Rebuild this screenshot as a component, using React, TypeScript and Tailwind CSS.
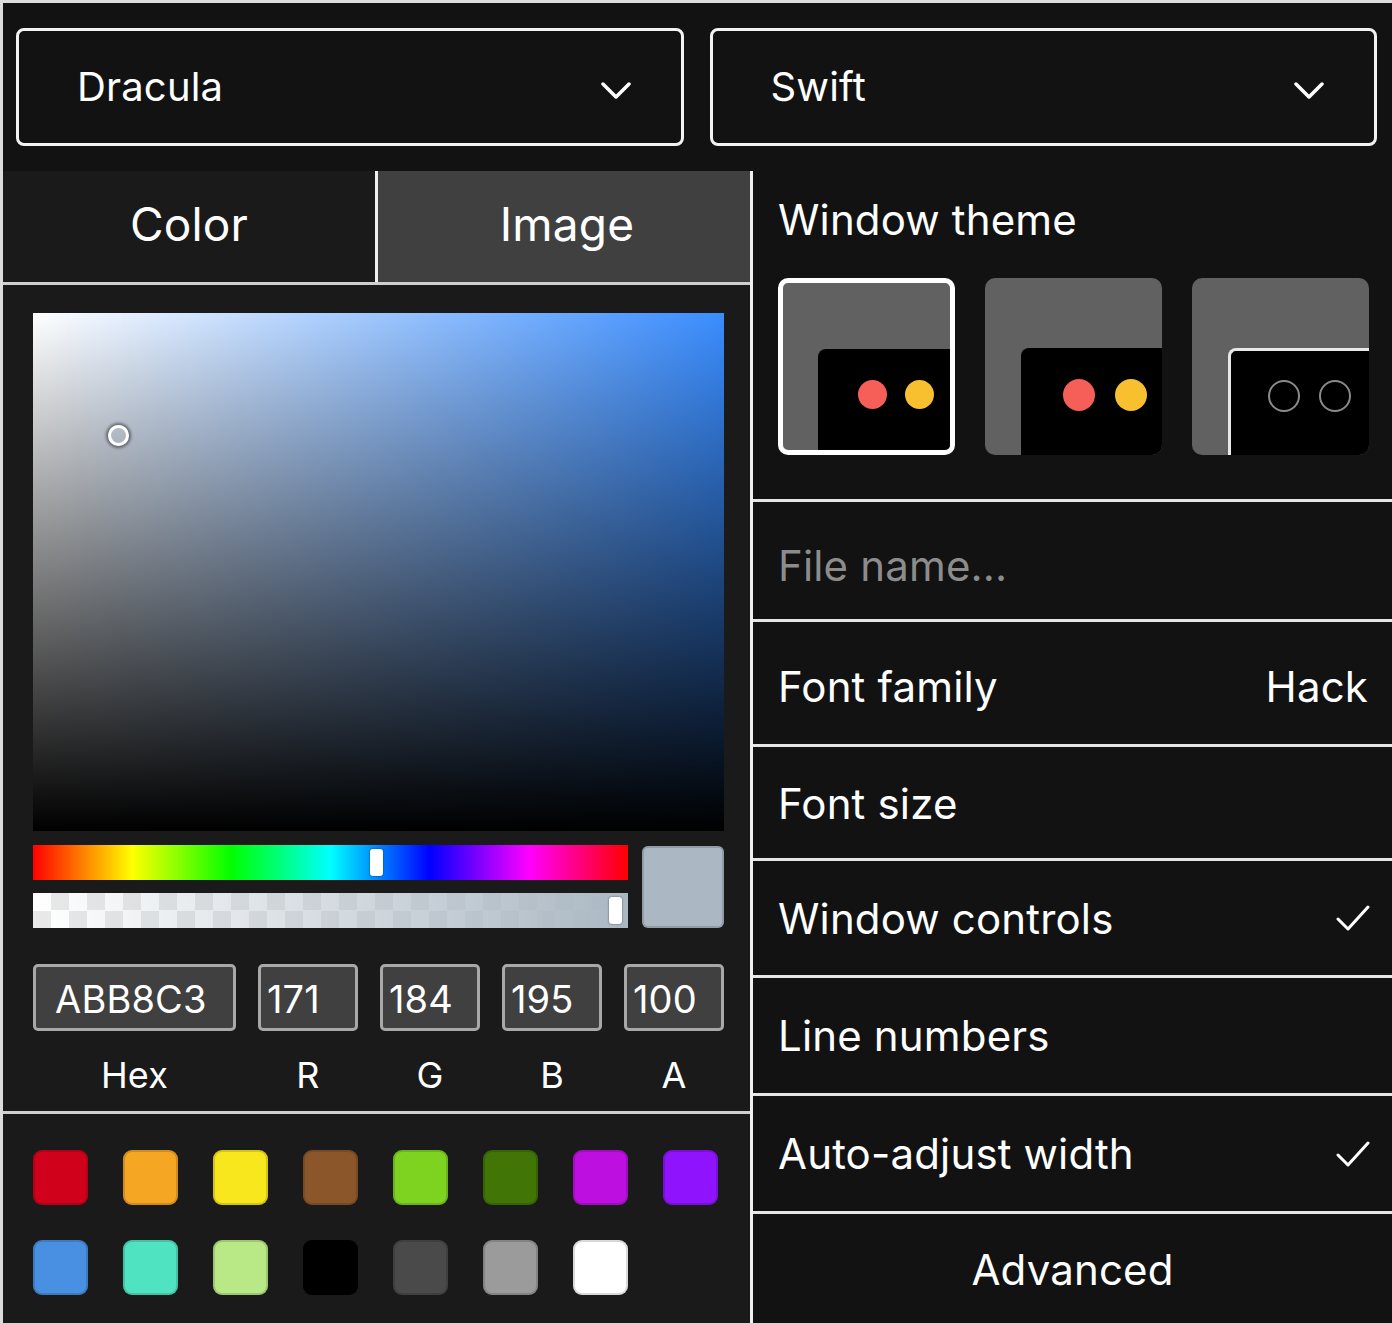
import React from "react";

const PRESETS = [
  "#D0021B", "#F5A623", "#F8E71C", "#8B572A", "#7ED321", "#417505", "#BD10E0", "#9013FE",
  "#4A90E2", "#50E3C2", "#B8E986", "#000000", "#4A4A4A", "#9B9B9B", "#FFFFFF",
];

const FIELDS = [
  { label: "R", value: "171" },
  { label: "G", value: "184" },
  { label: "B", value: "195" },
  { label: "A", value: "100" },
];

function Chevron() {
  return (
    <svg width="30" height="18" viewBox="0 0 30 18" fill="none" className="mt-[7px]">
      <path d="M2 2 L15 15 L28 2" stroke="white" strokeWidth="3.5" strokeLinecap="round" strokeLinejoin="round" />
    </svg>
  );
}

function Check() {
  return (
    <svg width="34" height="28" viewBox="0 0 34 28" fill="none">
      <path d="M2 15 L12 25 L32 3" stroke="white" strokeWidth="3" strokeLinecap="round" strokeLinejoin="round" />
    </svg>
  );
}

function Dropdown({ label }: { label: string }) {
  return (
    <div className="flex-1 h-[118px] rounded-[8px] border-[3px] border-[#f2f2f2] flex items-center justify-between pl-[58px] pr-[50px]">
      <span className="text-[40px] text-white">{label}</span>
      <Chevron />
    </div>
  );
}

function Thumb({ variant, selected }: { variant: "sharp" | "bw" | "outline"; selected?: boolean }) {
  const dot = selected ? "w-[29px] h-[29px]" : "w-[32px] h-[32px]";
  const inner =
    variant === "outline"
      ? "gap-[19px] pl-[37px] pt-[29px] border-t-[3px] border-l-[3px] border-[#e8e8e8]"
      : selected
        ? "gap-[18px] pl-[40px] pt-[31px]"
        : "gap-[20px] pl-[42px] pt-[31px]";
  return (
    <div
      className={`w-[177px] h-[177px] rounded-[10px] overflow-hidden bg-[#616161] ${
        selected ? "border-[5px] border-white" : ""
      }`}
    >
      <div className={`h-full ${selected ? "pl-[35px] pt-[66px]" : "pl-[36px] pt-[70px]"}`}>
        <div className={`h-full rounded-tl-[8px] bg-black flex items-start ${inner}`}>
          {variant === "outline" ? (
            <>
              <div className="w-[32px] h-[32px] rounded-full border-2 border-[#8a8a8a] shrink-0" />
              <div className="w-[32px] h-[32px] rounded-full border-2 border-[#8a8a8a] shrink-0" />
            </>
          ) : (
            <>
              <div className={`${dot} rounded-full bg-[#f65f57] shrink-0`} />
              <div className={`${dot} rounded-full bg-[#f8bf2f] shrink-0`} />
            </>
          )}
        </div>
      </div>
    </div>
  );
}

function Row({ h, children, center }: { h: string; children: React.ReactNode; center?: boolean }) {
  return (
    <div
      className={`${h} border-b-[3px] border-[#e6e6e6] flex items-center pl-[25px] pr-[22px] text-[42px] text-white ${
        center ? "justify-center" : "justify-between"
      }`}
    >
      {children}
    </div>
  );
}

export default function App() {
  return (
    <div className="w-[1392px] h-[1323px] overflow-hidden bg-[#121212] border-t-[3px] border-l-[3px] border-[#dcdcdc] flex flex-col font-['Inter','Noto_Sans',sans-serif] tracking-[0.01em]">
      {/* Selects */}
      <div className="flex gap-[26px] pl-[13px] pr-[15px] pt-[25px] pb-[25px]">
        <Dropdown label="Dracula" />
        <Dropdown label="Swift" />
      </div>

      <div className="flex flex-1 min-h-0">
        {/* Left: background picker */}
        <div className="w-[750px] shrink-0 bg-[#1a1a1a] border-r-[3px] border-[#f0f0f0] flex flex-col">
          <div className="flex h-[114px] border-b-[3px] border-[#cfcfcf]">
            <div className="w-[375px] flex items-center justify-center pb-[4px] text-[46px] text-white border-r-[3px] border-[#f0f0f0]">
              Color
            </div>
            <div className="flex-1 flex items-center justify-center pb-[4px] pl-[6px] text-[46px] text-white bg-[#404040]">
              Image
            </div>
          </div>

          <div className="h-[829px] border-b-[3px] border-[#cfcfcf] pl-[30px] pr-[26px] pt-[28px] flex flex-col">
            {/* saturation */}
            <div className="relative h-[518px] bg-[#3a8dff]">
              <div className="w-full h-full bg-[linear-gradient(to_right,#ffffff,rgba(255,255,255,0))]">
                <div className="w-full h-full bg-[linear-gradient(to_top,#000000,rgba(0,0,0,0))]" />
              </div>
              <div className="absolute left-[75px] top-[112px] w-[21px] h-[21px] rounded-full border-[3px] border-white shadow-[0_0_3px_2px_rgba(0,0,0,0.45)]" />
            </div>

            <div className="flex gap-[14px] mt-[14px]">
              <div className="flex-1 flex flex-col gap-[13px]">
                <div className="relative h-[35px] bg-[linear-gradient(to_right,#ff0000,#ffff00,#00ff00,#00ffff,#0000ff,#ff00ff,#ff0000)]">
                  <div className="absolute left-[337px] top-[4px] w-[13px] h-[27px] rounded-[3px] bg-white shadow-[0_0_2px_rgba(0,0,0,0.6)]" />
                </div>
                <div className="relative h-[35px] bg-white bg-[conic-gradient(#e9e9e9_25%,#ffffff_0_50%,#e9e9e9_0_75%,#ffffff_0)] bg-size-[36px_35px]">
                  <div className="w-full h-full bg-[linear-gradient(to_right,rgba(171,184,195,0),rgb(171,184,195))]" />
                  <div className="absolute left-[576px] top-[4px] w-[13px] h-[27px] rounded-[3px] bg-white shadow-[0_0_2px_rgba(0,0,0,0.6)]" />
                </div>
              </div>
              <div className="w-[82px] h-[82px] rounded-[6px] bg-[#abb8c3] shadow-[inset_0_0_0_2px_rgba(0,0,0,0.15)] mt-px" />
            </div>

            <div className="flex gap-[22px] mt-[36px]">
              <div className="w-[203px] flex flex-col items-center">
                <div className="w-full h-[67px] rounded-[5px] border-[3px] border-[#a8a8a8] bg-[#404040] flex items-center pl-[19px] pt-[4px] text-[38px] text-white">
                  ABB8C3
                </div>
                <div className="mt-[22px] text-[36px] leading-[44px] text-white">Hex</div>
              </div>
              {FIELDS.map((f) => (
                <div key={f.label} className="flex-1 flex flex-col items-center">
                  <div className="w-full h-[67px] rounded-[5px] border-[3px] border-[#a8a8a8] bg-[#404040] flex items-center pl-[6px] pt-[4px] text-[38px] text-white">
                    {f.value}
                  </div>
                  <div className="mt-[22px] text-[36px] leading-[44px] text-white">{f.label}</div>
                </div>
              ))}
            </div>
          </div>

          {/* presets */}
          <div className="pl-[30px] pt-[36px] grid grid-cols-[repeat(8,55px)] gap-[35px]">
            {PRESETS.map((c) => (
              <div
                key={c}
                className="w-[55px] h-[55px] rounded-[9px] shadow-[inset_0_0_0_2px_rgba(0,0,0,0.15)]"
                style={{ backgroundColor: c }}
              />
            ))}
          </div>
        </div>

        {/* Right: settings */}
        <div className="flex-1 flex flex-col">
          <div className="border-b-[3px] border-[#e6e6e6] pl-[25px] pt-[24px] pb-[44px]">
            <div className="text-[42px] leading-[50px] text-white">Window theme</div>
            <div className="flex gap-[30px] mt-[33px]">
              <Thumb variant="sharp" selected />
              <Thumb variant="bw" />
              <Thumb variant="outline" />
            </div>
          </div>
          <Row h="h-[120px] pt-[10px]">
            <span className="text-[#8c8c8c]">File name...</span>
          </Row>
          <Row h="h-[125px] pt-[6px]">
            <span>Font family</span>
            <span className="pr-[2px]">Hack</span>
          </Row>
          <Row h="h-[114px] pt-[2px]">
            <span>Font size</span>
          </Row>
          <Row h="h-[117px]">
            <span>Window controls</span>
            <Check />
          </Row>
          <Row h="h-[118px]">
            <span>Line numbers</span>
          </Row>
          <Row h="h-[118px]">
            <span>Auto-adjust width</span>
            <Check />
          </Row>
          <div className="flex-1 flex items-center justify-center text-[42px] text-white pt-[2px]">Advanced</div>
        </div>
      </div>
    </div>
  );
}
